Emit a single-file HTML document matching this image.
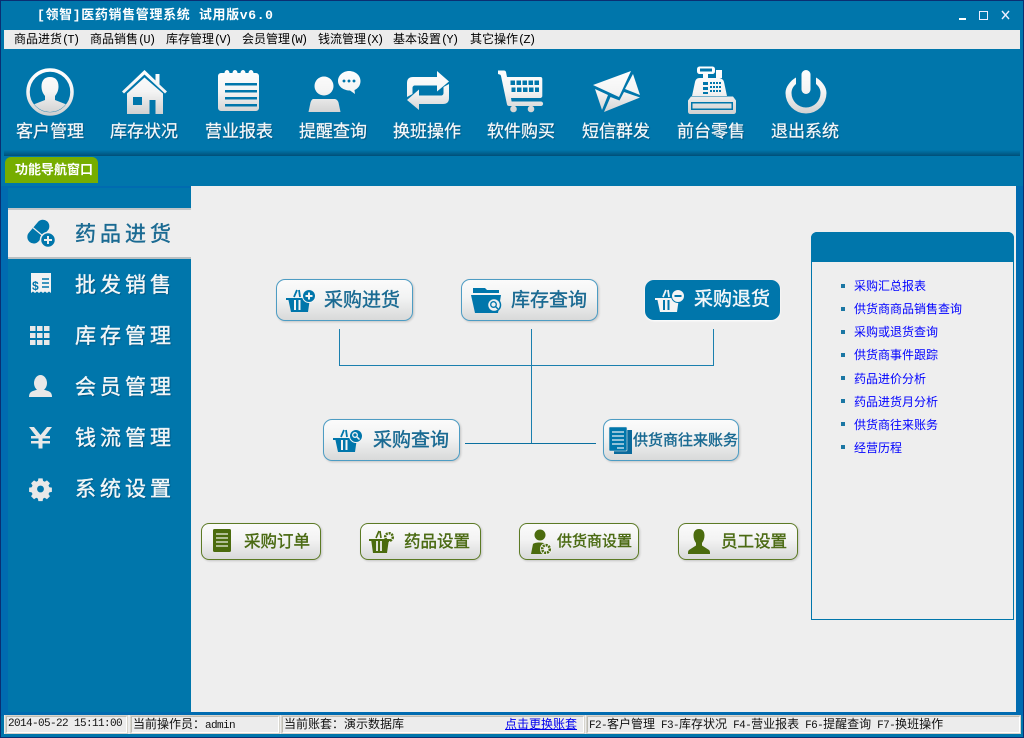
<!DOCTYPE html>
<html lang="zh">
<head>
<meta charset="utf-8">
<title>医药销售管理系统</title>
<style>
html,body{margin:0;padding:0;width:1024px;height:738px;overflow:hidden;background:#0076ab;}
body{position:relative;font-family:"Liberation Sans","WenQuanYi Zen Hei","Noto Sans CJK SC",sans-serif;}
div,a,span{position:absolute;white-space:nowrap;}
b{font-weight:normal;}
.bmp{font-family:"Liberation Sans","WenQuanYi Zen Hei","Noto Sans CJK SC",sans-serif;font-size:12px;line-height:14px;color:#000;}
.bmp b{font:12px/14px "Liberation Mono",monospace;letter-spacing:-1.8px;}
.tb{top:121px;width:94px;text-align:center;color:#f4f7f9;font:17px/22px "Liberation Sans","Noto Sans CJK SC",sans-serif;-webkit-text-stroke:.25px #f4f7f9;text-shadow:1px 1px 1px rgba(0,50,80,.55);}
.sd{left:75px;width:110px;color:#f2f6f8;font:21px/28px "Liberation Sans","Noto Sans CJK SC",sans-serif;letter-spacing:4px;-webkit-text-stroke:.4px #f2f6f8;text-shadow:1px 1px 1px rgba(0,50,80,.5);}
.btn{box-sizing:border-box;height:42px;width:137px;border:1px solid #4d9cc3;border-radius:9px;background:linear-gradient(#fbfbfb 0,#f2f3f3 45%,#d8d9d9 100%);box-shadow:1px 1px 2px rgba(0,0,0,.18);color:#1a6a92;font:19px/41px "Liberation Sans","Noto Sans CJK SC",sans-serif;-webkit-text-stroke:.4px #1a6a92;}
.btn span{top:0;}
.btn.on{background:#0076ab;border-color:#0076ab;color:#f4f7f9;-webkit-text-stroke:.4px #f4f7f9;box-shadow:0 1px 2px #fff;}
.gb{box-sizing:border-box;top:523px;height:37px;width:120px;border:1px solid #5c7a25;border-radius:8px;background:linear-gradient(#fbfbfb 0,#f3f3f3 45%,#d8d9d9 100%);box-shadow:1px 1px 2px rgba(0,0,0,.18);color:#4a6a12;font:16.5px/36px "Liberation Sans","Noto Sans CJK SC",sans-serif;-webkit-text-stroke:.4px #4a6a12;}
.gb span{top:0;}
.ln{background:#1a7fae;}
.lk{left:854px;color:#0000ff;font:12px/14px "Liberation Sans","WenQuanYi Zen Hei","Noto Sans CJK SC",sans-serif;}
.bl{left:841px;width:4px;height:4px;background:#1a76a3;}
.cell{box-sizing:border-box;top:716px;height:17px;background:#ececec;border:1px solid;border-color:#bdbcb4 #fff #fff #bdbcb4;outline:1px solid #d6d4cc;font:11px/15px "Liberation Mono",monospace;letter-spacing:-.6px;color:#111;padding-left:1px;}
.cell b{font:12px/15px "Liberation Sans","WenQuanYi Zen Hei","Noto Sans CJK SC",sans-serif;letter-spacing:0;}
svg{position:absolute;overflow:visible;}
</style>
</head>
<body>
<!-- window frame -->
<div style="left:0;top:0;width:1024px;height:1px;background:#0a2f72"></div>
<div style="left:0;top:0;width:1px;height:738px;background:#0a2f72"></div>
<div style="left:1023px;top:0;width:1px;height:738px;background:#0a2f72"></div>
<div style="left:0;top:737px;width:1024px;height:1px;background:#0a2f72"></div>
<div style="left:1px;top:186px;width:7px;height:530px;background:#006bb0"></div>
<div style="left:1016px;top:186px;width:7px;height:530px;background:#006bb0"></div>
<div style="left:8px;top:186px;width:183px;height:2px;background:#006bb0"></div>
<div style="left:1px;top:712px;width:1022px;height:4px;background:#006bb0"></div>

<!-- title -->
<div style="left:37px;top:8px;color:#fff;font:bold 13px/15px 'Liberation Mono','Noto Sans CJK SC',monospace;letter-spacing:.65px;">[领智]医药销售管理系统 试用版v6.0</div>
<div style="left:959px;top:18px;width:7px;height:2px;background:#fff"></div>
<div style="left:979px;top:11px;width:7px;height:7px;border:1px solid #eef;"></div>
<svg style="left:0;top:0" width="1024" height="30"><path d="M1002 11l7 8M1009 11l-7 8" stroke="#eef" stroke-width="1.4" fill="none"/></svg>

<!-- menu -->
<div style="left:4px;top:30px;width:1016px;height:19px;background:#ececec"></div>
<div class="bmp" style="left:14px;top:32px">商品进货<b>(T)</b></div>
<div class="bmp" style="left:90px;top:32px">商品销售<b>(U)</b></div>
<div class="bmp" style="left:166px;top:32px">库存管理<b>(V)</b></div>
<div class="bmp" style="left:242px;top:32px">会员管理<b>(W)</b></div>
<div class="bmp" style="left:318px;top:32px">钱流管理<b>(X)</b></div>
<div class="bmp" style="left:393px;top:32px">基本设置<b>(Y)</b></div>
<div class="bmp" style="left:470px;top:32px">其它操作<b>(Z)</b></div>

<!-- toolbar icons -->
<svg style="left:0;top:0" width="1024" height="125">
<defs>
<linearGradient id="g" gradientUnits="userSpaceOnUse" x1="0" y1="68" x2="0" y2="115"><stop offset="0" stop-color="#fff"/><stop offset=".5" stop-color="#f4f4f4"/><stop offset="1" stop-color="#cfcfcf"/></linearGradient>
<clipPath id="cc"><circle cx="50" cy="92" r="20"/></clipPath>
</defs>
<g fill="url(#g)">
<!-- customer -->
<circle cx="50" cy="92" r="22" fill="none" stroke="url(#g)" stroke-width="3.5"/>
<path clip-path="url(#cc)" d="M50 77c-6 0-8.500 4-8.500 9.500 0 4 1.500 7 3.500 9.500v4l-14 5.500v9h38v-9l-14-5.500v-4c2-2.500 3.500-5.500 3.500-9.500 0-5.500-2.500-9.500-8.500-9.500z"/>
<!-- house -->
<path d="M144.500 70l11 10.500V74h4v10.500l7.500 7-2 2-20.500-19-20.500 19-2-2z"/>
<path fill-rule="evenodd" d="M144.500 77.500L127 93.500v20.500h36V93.500zM133 97h9v8h-9zM149.500 100h6v14h-6z"/>
<!-- report -->
<path fill-rule="evenodd" d="M222 73h2.500a2.500 3 0 0 1 5 0h3a2.500 3 0 0 1 5 0h3a2.500 3 0 0 1 5 0h3a2.500 3 0 0 1 5 0h2.500a3 3 0 0 1 3 3v32a3 3 0 0 1-3 3h-35a3 3 0 0 1-3-3V76a3 3 0 0 1 3-3zM225 83v2.500h32V83zM225 90v2.500h32V90zM225 97v2.500h32V97zM225 104v2.500h32V104z"/>
<!-- remind -->
<circle cx="324" cy="86" r="9.500"/>
<path d="M313 99h22c2 .5 3 2 3.500 3.500l2 9.500h-32l2-9.500c.5-1.500 1.200-3 2.500-3.500z"/>
<path fill-rule="evenodd" d="M349 71c6.500 0 11.500 4.500 11.500 10 0 4-2.200 7.500-6 9l.5 4-5-3.500c-6.500 0-12-4-12-9.500s5-10 11-10zM344 79.500a1.500 1.500 0 1 0 .01 0zM349 79.500a1.500 1.500 0 1 0 .01 0zM354 79.500a1.500 1.500 0 1 0 .01 0z"/>
<!-- switch -->
<path d="M437 71l12 10.500-12 10v-6h-22c-1.500 0-2.500 1-2.500 2.500v6l-5.500 3V83c0-4 2-6 6-6h24z"/>
<path d="M419 110l-12-10 12-10.500v6h22c1.500 0 2.500-1 2.500-2.500v-6l5.500-3V98c0 4-2 6-6 6h-24z"/>
<!-- cart -->
<path fill-rule="evenodd" d="M498 70.500h6c1 0 1.700.5 2 1.500l1 5h33.500c1.200 0 1.800.8 1.800 2v17c0 1-.8 1.800-1.800 2H511l.6 3.500h29c1.500 0 2.500 1 2.500 2.200s-1 2.300-2.500 2.300H509c-1 0-1.700-.6-2-1.500l-6-28.500c-.2-1-.8-1.500-1.500-1.500L498 74zM510.500 80.500v4.500h4.500v-4.500zM516.500 80.500v4.500h4.500v-4.500zM522.500 80.500v4.500h4.500v-4.500zM528.500 80.500v4.500h4.500v-4.500zM534.500 80.500v4.500h4.500v-4.500zM511.500 87.500v4.500h4v-4.500zM517 87.500v4.500h4.500v-4.500zM523 87.500v4.500h4.500v-4.500zM529 87.500v4.500h4.500v-4.500zM535 87.500v4.500h4v-4.500z"/>
<circle cx="513.500" cy="109" r="3.300"/><circle cx="531" cy="109" r="3.300"/>
<!-- mail -->
<path d="M593 85l38-14-12 26z"/>
<path d="M633 74l7 21-15-6z"/>
<path d="M595 89l13 6-6 15z"/>
<path d="M610.500 97l9 3.500 4.500-8.500 16 5.500-36 14.500z"/>
<!-- register -->
<path fill-rule="evenodd" d="M700 66.500h12c2 0 3 1 3 3v1.500c0 2-1 3-3 3h-4v4h8V70h6v8h-2.500c2.500.5 4 2 4.500 4l3 14h-35l3-14c.5-2.500 2-4 4.500-4H703v-4h-3c-2 0-3-1-3-3v-1.500c0-2 1-3 3-3zM700 68.500v3h12v-3zM703 82v3h5v-3zM703 87v3h5v-3zM703 92v2h5v-2zM710 82v2h2v-2zM713 82v2h2v-2zM716 82v2h2v-2zM719 82v2h2v-2zM710 86v2h2v-2zM713 86v2h2v-2zM716 86v2h2v-2zM719 86v2h2v-2zM710 90v2h2v-2zM713 90v2h2v-2zM716 90v2h2v-2zM719 90v2h2v-2z"/>
<path fill-rule="evenodd" d="M691 96.500h42l3 4v11c0 1.500-1 2.500-2.500 2.500h-43c-1.500 0-2.500-1-2.500-2.500v-11zM691 102v8h42v-8zM692.500 103.500h39v5h-39z"/>
<!-- power -->
<rect x="801.500" y="70" width="9" height="24" rx="4.500"/>
<path d="M796 77.500v6.500c-3 2.500-4.500 5.500-4.500 9a14.500 14.500 0 0 0 29 0c0-3.500-1.500-6.500-4.500-9v-6.500c6 3.500 10.500 9.500 10.500 15.500a20.500 20.500 0 0 1-41 0c0-6 4.500-12 10.500-15.500z"/>
</g>
</svg>

<div class="tb" style="left:3px">客户管理</div>
<div class="tb" style="left:97px">库存状况</div>
<div class="tb" style="left:192px">营业报表</div>
<div class="tb" style="left:286px">提醒查询</div>
<div class="tb" style="left:380px">换班操作</div>
<div class="tb" style="left:474px">软件购买</div>
<div class="tb" style="left:569px">短信群发</div>
<div class="tb" style="left:664px">前台零售</div>
<div class="tb" style="left:758px">退出系统</div>

<!-- separator -->
<div style="left:4px;top:150px;width:1016px;height:6px;background:linear-gradient(#0076ab,#004f78)"></div>

<!-- tab -->
<div style="left:5px;top:157px;width:93px;height:26px;background:#76ad00;border-radius:6px 6px 0 0;color:#fff;font:bold 13px/26px 'Liberation Sans','Noto Sans CJK SC',sans-serif;text-indent:10px;">功能导航窗口</div>

<!-- content -->
<div style="left:191px;top:186px;width:825px;height:526px;background:#eeeeee"></div>

<!-- sidebar -->
<div style="left:8px;top:208px;width:183px;height:51px;box-sizing:border-box;background:#eeeeee;border-top:2px solid #c2c6c8;border-bottom:2px solid #b9bfc2"></div>
<div class="sd" style="top:221px;color:#1a6a92;-webkit-text-stroke:.4px #1a6a92;text-shadow:none">药品进货</div>
<div class="sd" style="top:272px">批发销售</div>
<div class="sd" style="top:323px">库存管理</div>
<div class="sd" style="top:374px">会员管理</div>
<div class="sd" style="top:425px">钱流管理</div>
<div class="sd" style="top:476px">系统设置</div>

<svg style="left:0;top:0" width="200" height="520">
<!-- pill -->
<g transform="rotate(-50 38 232)"><rect x="25" y="225.500" width="27" height="13" rx="6.500" fill="#0076ab"/><rect x="37.500" y="225.500" width="1.200" height="13" fill="#eee"/></g>
<circle cx="48" cy="240" r="7.500" fill="#0076ab" stroke="#eee" stroke-width="1.500"/>
<path d="M48 236v8M44 240h8" stroke="#eee" stroke-width="2"/>
<!-- invoice -->
<path d="M31 273h20v20l-2-1.500-2 1.500-2-1.500-2 1.500-2-1.500-2 1.500-2-1.500-2 1.500-2-1.500-2 1.500z" fill="#f2f2f2"/>
<path d="M42 279h7M42 283h7M42 287h7" stroke="#0076ab" stroke-width="1.600"/>
<text x="32" y="290" font-family="Liberation Sans" font-weight="bold" font-size="12" fill="#0076ab">$</text>
<!-- grid -->
<g fill="#e8e8e8">
<rect x="30" y="326" width="5.500" height="5"/><rect x="37" y="326" width="5.500" height="5"/><rect x="44" y="326" width="5.500" height="5"/>
<rect x="30" y="333" width="5.500" height="5"/><rect x="37" y="333" width="5.500" height="5"/><rect x="44" y="333" width="5.500" height="5"/>
<rect x="30" y="340" width="5.500" height="5"/><rect x="37" y="340" width="5.500" height="5"/><rect x="44" y="340" width="5.500" height="5"/>
<!-- member -->
<ellipse cx="40.500" cy="383" rx="6.500" ry="8"/>
<path d="M29 397c0-3 1-5 4-6l4.500-1.500h6l4.500 1.500c3 1 4 3 4 6z"/>
<!-- yen -->
<path d="M29 427h5l6.500 8 6.500-8h5l-7 9h5v2.500h-7.500v2.500h7.500v2.500h-7.500v5h-4v-5H31V441h7.500v-2.500H31V436h5z"/>
</g>
<!-- gear -->
<path fill="#e8e8e8" fill-rule="evenodd" d="M38 479h5l.5 3 2 1 2.600-1.700 3.500 3.500-1.700 2.600 1 2 3 .5v5l-3 .5-1 2 1.700 2.600-3.500 3.500-2.600-1.700-2 1-.5 3h-5l-.5-3-2-1-2.600 1.700-3.500-3.500 1.700-2.600-1-2-3-.5v-5l3-.5 1-2-1.700-2.600 3.500-3.500 2.600 1.700 2-1zM40.500 487.500a4 4 0 1 0 .01 0z" transform="translate(40.500,489) scale(.85) translate(-40.500,-491.500)"/>
</svg>

<!-- connector lines -->
<div class="ln" style="left:339px;top:329px;width:1px;height:36px"></div>
<div class="ln" style="left:713px;top:329px;width:1px;height:36px"></div>
<div class="ln" style="left:339px;top:365px;width:375px;height:1px"></div>
<div class="ln" style="left:531px;top:329px;width:1px;height:115px"></div>
<div style="left:465px;top:443px;width:131px;height:1px;background:#0a6f9f"></div>

<!-- blue buttons -->
<div class="btn" style="left:276px;top:279px"><span style="left:47px">采购进货</span>
<svg style="left:9px;top:8px" width="30" height="26"><path d="M2 10h22l-2 14H5z M0 10h26v2H0z" fill="#0076ab"/><path d="M9 12v10M13.500 12v10" stroke="#f4f4f4" stroke-width="2"/><path d="M8 9l3-7M14 9l-1-7" stroke="#0076ab" stroke-width="1.800"/><circle cx="23" cy="8" r="6.500" fill="#0076ab" stroke="#f4f4f4"/><path d="M23 4.500v7M19.500 8h7" stroke="#f4f4f4" stroke-width="2"/></svg></div>
<div class="btn" style="left:461px;top:279px"><span style="left:49px">库存查询</span>
<svg style="left:9px;top:8px" width="32" height="26"><path d="M2 0h12l2 2h12v3H2z" fill="#0076ab"/><path d="M0 7h30l-3 18H4z" fill="#0076ab"/><circle cx="23" cy="17" r="6.500" fill="#f0f0f0" stroke="#0076ab" stroke-width="1.500"/><circle cx="22.500" cy="16.500" r="2.800" fill="none" stroke="#0076ab" stroke-width="1.300"/><path d="M24.500 18.500l2.500 2.500" stroke="#0076ab" stroke-width="1.500"/></svg></div>
<div class="btn on" style="left:645px;top:280px;width:135px;height:40px;line-height:38px"><span style="left:48px">采购退货</span>
<svg style="left:9px;top:7px" width="30" height="26"><path d="M2 10h22l-2 14H5z M0 10h26v2H0z" fill="#f4f4f4"/><path d="M9 12v10M13.500 12v10" stroke="#0076ab" stroke-width="2"/><path d="M8 9l3-7M14 9l-1-7" stroke="#f4f4f4" stroke-width="1.800"/><circle cx="23" cy="8" r="6.500" fill="#f4f4f4" stroke="#0076ab"/><path d="M19.500 8h7" stroke="#0076ab" stroke-width="2"/></svg></div>
<div class="btn" style="left:323px;top:419px"><span style="left:49px">采购查询</span>
<svg style="left:9px;top:8px" width="30" height="26"><path d="M2 10h22l-2 14H5z M0 10h26v2H0z" fill="#0076ab"/><path d="M9 12v10M13.500 12v10" stroke="#f4f4f4" stroke-width="2"/><path d="M8 9l3-7M14 9l-1-7" stroke="#0076ab" stroke-width="1.800"/><circle cx="23" cy="8" r="6.500" fill="#0076ab" stroke="#f4f4f4"/><circle cx="22" cy="7" r="2.300" fill="none" stroke="#f4f4f4" stroke-width="1.300"/><path d="M24 9l2.500 2.500" stroke="#f4f4f4" stroke-width="1.500"/></svg></div>
<div class="btn" style="left:603px;top:419px;width:136px;font-size:15px"><span style="left:29px">供货商往来账务</span>
<svg style="left:5px;top:7px" width="24" height="28"><rect x="5" y="3" width="18" height="24" fill="#0a6a9c"/><rect x="0" y="0" width="18" height="24" rx="1" fill="#0076ab" stroke="#e8e8e8" stroke-width=".6"/><path d="M3 5h12M3 9h12M3 13h12M3 17h12M8 21h7" stroke="#e8eef2" stroke-width="1.300"/></svg></div>

<!-- green buttons -->
<div class="gb" style="left:201px"><span style="left:42px">采购订单</span>
<svg style="left:11px;top:5px" width="20" height="24"><rect width="18" height="23" rx="1.500" fill="#4b6b0e"/><path d="M3 5h12M3 9h12M3 13h12M3 17h12" stroke="#eef0e6" stroke-width="1.300"/></svg></div>
<div class="gb" style="left:360px;width:121px"><span style="left:43px">药品设置</span>
<svg style="left:8px;top:6px" width="28" height="24"><path d="M2 9h18l-2 14H4z M0 9h22v2H0z" fill="#4b6b0e"/><path d="M8 11v10M12 11v10" stroke="#f0f0f0" stroke-width="1.800"/><path d="M7 8l3-7M12 8l-1-7" stroke="#4b6b0e" stroke-width="1.600"/><circle cx="20" cy="7" r="3.800" fill="none" stroke="#4b6b0e" stroke-width="2.500" stroke-dasharray="2 .9"/></svg></div>
<div class="gb" style="left:519px;font-size:15px"><span style="left:37px">供货商设置</span>
<svg style="left:9px;top:5px" width="28" height="27"><circle cx="11" cy="6" r="5.500" fill="#4b6b0e"/><path d="M2 25l2-10c2-2 10-2 13 0v10z" fill="#4b6b0e"/><circle cx="17" cy="20" r="6" fill="#f0f0f0"/><circle cx="17" cy="20" r="3.800" fill="none" stroke="#4b6b0e" stroke-width="2.600" stroke-dasharray="2 .9"/></svg></div>
<div class="gb" style="left:678px"><span style="left:42px">员工设置</span>
<svg style="left:9px;top:5px" width="24" height="26"><path d="M11 0c-4 0-5.500 3-5.500 6.500 0 3 1 5.500 2.500 7.500v2.500L1 21c-1 1-1 2-1 4h22c0-2 0-3-1-4l-7-4.500V14c1.500-2 2.500-4.500 2.500-7.500C16.500 3 15 0 11 0z" fill="#4b6b0e"/></svg></div>

<!-- right panel -->
<div style="box-sizing:border-box;left:811px;top:232px;width:203px;height:388px;border:1px solid #0076ab;border-radius:6px 6px 0 0"></div>
<div style="left:811px;top:232px;width:203px;height:30px;background:#0076ab;border-radius:6px 6px 0 0"></div>
<div class="bl" style="top:284px"></div><a class="lk" style="top:279px">采购汇总报表</a>
<div class="bl" style="top:307px"></div><a class="lk" style="top:302px">供货商商品销售查询</a>
<div class="bl" style="top:330px"></div><a class="lk" style="top:325px">采购或退货查询</a>
<div class="bl" style="top:353px"></div><a class="lk" style="top:348px">供货商事件跟踪</a>
<div class="bl" style="top:376px"></div><a class="lk" style="top:372px">药品进价分析</a>
<div class="bl" style="top:399px"></div><a class="lk" style="top:395px">药品进货月分析</a>
<div class="bl" style="top:422px"></div><a class="lk" style="top:418px">供货商往来账务</a>
<div class="bl" style="top:445px"></div><a class="lk" style="top:441px">经营历程</a>

<!-- status bar -->
<div style="left:4px;top:715px;width:1016px;height:19px;background:#ececec"></div>
<div class="cell" style="left:6px;width:121px">2014-05-22 15:11:00</div>
<div class="cell" style="left:131px;width:148px"><b>当前操作员：</b>admin</div>
<div class="cell" style="left:282px;width:302px"><b>当前账套：演示数据库</b><a style="left:222px;top:0;color:#0000ee;text-decoration:underline;letter-spacing:0;font:12px/15px 'Liberation Sans','WenQuanYi Zen Hei','Noto Sans CJK SC',sans-serif;">点击更换账套</a></div>
<div class="cell" style="left:587px;width:433px">F2-<b>客户管理</b> F3-<b>库存状况</b> F4-<b>营业报表</b> F6-<b>提醒查询</b> F7-<b>换班操作</b></div>
</body>
</html>
